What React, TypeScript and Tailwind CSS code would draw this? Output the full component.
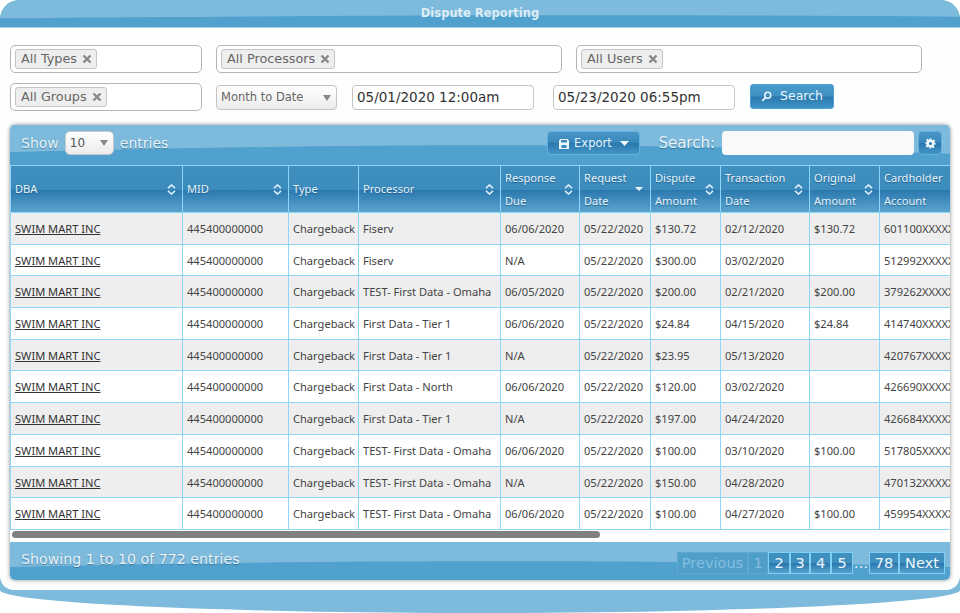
import React from "react";

const rows = [
  ["445400000000", "Chargeback", "Fiserv", "06/06/2020", "05/22/2020", "$130.72", "02/12/2020", "$130.72", "601100XXXXXX"],
  ["445400000000", "Chargeback", "Fiserv", "N/A", "05/22/2020", "$300.00", "03/02/2020", "", "512992XXXXXX"],
  ["445400000000", "Chargeback", "TEST- First Data - Omaha", "06/05/2020", "05/22/2020", "$200.00", "02/21/2020", "$200.00", "379262XXXXXX"],
  ["445400000000", "Chargeback", "First Data - Tier 1", "06/06/2020", "05/22/2020", "$24.84", "04/15/2020", "$24.84", "414740XXXXXX"],
  ["445400000000", "Chargeback", "First Data - Tier 1", "N/A", "05/22/2020", "$23.95", "05/13/2020", "", "420767XXXXXX"],
  ["445400000000", "Chargeback", "First Data - North", "06/06/2020", "05/22/2020", "$120.00", "03/02/2020", "", "426690XXXXXX"],
  ["445400000000", "Chargeback", "First Data - Tier 1", "N/A", "05/22/2020", "$197.00", "04/24/2020", "", "426684XXXXXX"],
  ["445400000000", "Chargeback", "TEST- First Data - Omaha", "06/06/2020", "05/22/2020", "$100.00", "03/10/2020", "$100.00", "517805XXXXXX"],
  ["445400000000", "Chargeback", "TEST- First Data - Omaha", "N/A", "05/22/2020", "$150.00", "04/28/2020", "", "470132XXXXXX"],
  ["445400000000", "Chargeback", "TEST- First Data - Omaha", "06/06/2020", "05/22/2020", "$100.00", "04/27/2020", "$100.00", "459954XXXXXX"],
];

const widths = [172, 106, 70, 142, 79, 71, 70, 89, 70, 100];

function Wave({ d }: { d: string }) {
  return (
    <svg className="absolute inset-0 h-full w-full" viewBox="0 0 100 100" preserveAspectRatio="none">
      <path d={d} fill="#7dbadb" />
    </svg>
  );
}

function Tag({ label }: { label: string }) {
  return (
    <span className="inline-flex h-[20px] items-center gap-[5px] rounded-[3px] border border-[#c4c4c4] bg-[#eeeeee] pl-[5px] pr-[4px] text-[12.8px] text-[#666666]">
      {label}
      <svg width="10" height="10" viewBox="0 0 10 10" className="shrink-0">
        <path d="M1.5 1.5 8.5 8.5M8.5 1.5 1.5 8.5" stroke="#888888" strokeWidth="2.4" />
      </svg>
    </span>
  );
}

function TagBox({ label, w }: { label: string; w: string }) {
  return (
    <div className={`flex h-[28px] items-center rounded-[5px] border border-[#b5b5b5] bg-white pl-[4px] ${w}`}>
      <Tag label={label} />
    </div>
  );
}

function DateBox({ value, w }: { value: string; w: string }) {
  return (
    <div className={`flex h-[25px] items-center rounded-[4px] border border-[#c4c4c4] bg-white pl-[4px] pt-[1px] text-[13.5px] text-[#333333] ${w}`}>
      {value}
    </div>
  );
}

function Sort({ active }: { active?: boolean }) {
  if (active) {
    return (
      <svg width="10" height="6" viewBox="0 0 10 6" className="shrink-0">
        <path d="M1 1h8L5 5z" fill="#e8f4fb" />
      </svg>
    );
  }
  return (
    <svg width="9" height="11" viewBox="0 0 9 11" className="shrink-0">
      <path d="M1 4.2 4.5 1 8 4.2M1 6.8 4.5 10 8 6.8" fill="none" stroke="#dceefa" strokeWidth="1.6" />
    </svg>
  );
}

function Head({ a, b, sort = true, active }: { a: string; b?: string; sort?: boolean; active?: boolean }) {
  return (
    <th className="relative border-x border-[#8dd6fb] p-0 text-left font-normal">
      <div className="flex h-[46px] items-center justify-between pl-[4px] pr-[6px] text-[#e6f3fb] [text-shadow:0_1px_1px_rgba(20,70,110,0.6)]">
        {b ? (
          <div className="flex flex-col gap-[7px] leading-[16px]">
            <span>{a}</span>
            <span>{b}</span>
          </div>
        ) : (
          <span className="pt-[1px]">{a}</span>
        )}
        {sort && <Sort active={active} />}
      </div>
    </th>
  );
}

function PageBtn({ label, w, off }: { label: string; w: string; off?: boolean }) {
  return (
    <span
      className={
        off
          ? `flex h-[22px] items-center justify-center border border-[#5ea8d0] bg-[#4f9fcb] pt-[2px] text-[#85bedd] ${w}`
          : `flex h-[22px] items-center justify-center border border-[#7fd0f5] bg-[linear-gradient(#3f8fbf_0%,#3f8fbf_50%,#2a78af_52%,#58a2cc_100%)] pt-[2px] text-[#eef7fc] ${w}`
      }
    >
      {label}
    </span>
  );
}

export default function App() {
  return (
    <div className="h-[613px] w-[960px] overflow-hidden bg-white [font-family:'DejaVu_Sans',Verdana,sans-serif]">
      <div className="h-[613px] w-[960px] rounded-t-[20px] rounded-b-[480px_23px] bg-[#7dbadb]">
        <div className="relative flex h-[28px] items-center justify-center overflow-hidden rounded-t-[20px] border-b border-[#a9cfe8] bg-[#50a1cd]">
          <Wave d="M0 0H100V62C70 52 40 56 0 68Z" />
          <span className="relative text-[11.5px] font-bold text-[#dcedf7]">Dispute Reporting</span>
        </div>

        <div className="flex h-[562px] flex-col rounded-b-[14px] bg-[#fdfefe] pt-[17px] pb-[10px] pl-[10px] pr-[10px]">
          <div className="flex gap-[14px]">
            <TagBox label="All Types" w="w-[192px]" />
            <TagBox label="All Processors" w="w-[346px]" />
            <TagBox label="All Users" w="w-[346px]" />
          </div>
          <div className="mt-[10px] flex items-center">
            <TagBox label="All Groups" w="w-[192px]" />
            <div className="ml-[14px] flex h-[25px] w-[121px] items-center justify-between rounded-[4px] border border-[#c4c4c4] bg-[linear-gradient(#ffffff,#ececec)] pl-[4px] pr-[5px] pt-[1px] text-[11.5px] text-[#666666]">
              Month to Date
              <svg width="8" height="6" viewBox="0 0 8 6"><path d="M0 0h8L4 6z" fill="#888888" /></svg>
            </div>
            <div className="ml-[15px]"><DateBox value="05/01/2020 12:00am" w="w-[182px]" /></div>
            <div className="ml-[19px]"><DateBox value="05/23/2020 06:55pm" w="w-[182px]" /></div>
            <div className="ml-[15px] flex h-[25px] w-[84px] -translate-y-[1px] items-center justify-center gap-[8px] rounded-[3px] border border-[#4fa3d3] bg-[linear-gradient(#4a9acb_0%,#3f90c2_48%,#2a78af_52%,#3f93c6_100%)] pt-[1px] text-[12.5px] text-[#e8f4fb]">
              <svg width="11" height="11" viewBox="0 0 11 11">
                <circle cx="6.8" cy="4.2" r="3" fill="none" stroke="#e8f4fb" strokeWidth="1.5" />
                <path d="M4.5 6.5 1.2 9.8" stroke="#e8f4fb" strokeWidth="1.8" />
              </svg>
              Search
            </div>
          </div>

          <div className="mt-[14px] flex-1 overflow-hidden rounded-[5px] bg-white shadow-[0_0_4px_#8a8a8a]">
            <div className="relative flex h-[40px] items-start overflow-hidden bg-[#50a1cd] pl-[11px] pr-[8px] pt-[6px]">
              <Wave d="M0 0H100V72C70 44 40 44 0 68Z" />
              <div className="relative flex h-[24px] items-center gap-[6px] text-[14px] text-[#e6f3fb] [text-shadow:0_1px_1px_rgba(20,70,110,0.5)]">
                Show
                <div className="flex h-[24px] w-[49px] items-center justify-between rounded-[5px] border border-[#c8c8c8] bg-[linear-gradient(#ffffff,#ececec)] pl-[4px] pr-[5px] text-[12px] text-[#555555] [text-shadow:none]">
                  10
                  <svg width="8" height="6" viewBox="0 0 8 6"><path d="M0 0h8L4 6z" fill="#888888" /></svg>
                </div>
                entries
              </div>
              <div className="relative ml-auto flex items-center">
                <div className="flex h-[24px] w-[93px] items-center justify-center gap-[5px] rounded-[4px] border border-[#5fb2df] bg-[linear-gradient(#4a96c6,#3788bb_48%,#2a78af_52%,#4595c6)] pt-[1px] text-[11.5px] text-[#e6f3fb]">
                  <svg width="10" height="10" viewBox="0 0 10 10">
                    <path d="M0 1.5 1.5 0h7L10 1.5V10H0z" fill="#eef7fc" />
                    <path d="M2 1h6v2.4H2zM2.5 6h5v3h-5z" fill="#3a8abc" />
                  </svg>
                  Export
                  <svg className="ml-[3px]" width="9" height="5" viewBox="0 0 9 5"><path d="M0 0h9L4.5 5z" fill="#eef7fc" /></svg>
                </div>
                <span className="ml-[18px] text-[15px] text-[#e6f3fb] [text-shadow:0_1px_1px_rgba(20,70,110,0.5)]">Search:</span>
                <div className="ml-[7px] h-[24px] w-[192px] rounded-[4px] bg-[#f9f9f9]" />
                <div className="ml-[4px] flex h-[24px] w-[24px] items-center justify-center rounded-[4px] border border-[#5fb2df] bg-[linear-gradient(#4a96c6,#3788bb_48%,#2a78af_52%,#4595c6)]">
                  <svg width="11" height="11" viewBox="0 0 24 24" fill="#eef7fc">
                    <path fillRule="evenodd" d="M10 1h4l.7 3.2 1.9.8 2.8-1.8 2.8 2.8-1.8 2.8.8 1.9L23 10v4l-3.2.7-.8 1.9 1.8 2.8-2.8 2.8-2.8-1.8-1.9.8L12.6 23h-2.9l-.7-3.2-1.9-.8-2.8 1.8-2.8-2.8 1.8-2.8-.8-1.9L1 14v-4l2.4-.7.8-1.9L2.4 4.6l2.8-2.8 2.8 1.8 1.9-.8zM12 8.5a3.5 3.5 0 1 0 0 7 3.5 3.5 0 0 0 0-7z" />
                  </svg>
                </div>
              </div>
            </div>

            <div className="overflow-hidden border-t border-[#8dd6fb]">
              <table className="w-[969px] table-fixed border-collapse text-[11.1px] text-[#444444] [font-family:'Noto_Sans',sans-serif]">
                <colgroup>
                  {widths.map((w, i) => (
                    <col key={i} style={{ width: w }} />
                  ))}
                </colgroup>
                <thead className="bg-[linear-gradient(#3f8fbf_0%,#3b8bbc_50%,#2a78af_51%,#5ea6cf_100%)]">
                  <tr>
                    <Head a="DBA" />
                    <Head a="MID" />
                    <Head a="Type" sort={false} />
                    <Head a="Processor" />
                    <Head a="Response" b="Due" />
                    <Head a="Request" b="Date" active />
                    <Head a="Dispute" b="Amount" />
                    <Head a="Transaction" b="Date" />
                    <Head a="Original" b="Amount" />
                    <Head a="Cardholder" b="Account" sort={false} />
                  </tr>
                </thead>
                <tbody>
                  {rows.map((r, i) => (
                    <tr key={i} className={i % 2 === 0 ? "bg-[#eeeeee]" : "bg-white"}>
                      <td className="h-[31.7px] whitespace-nowrap border border-[#8dd6fb] px-[4px] pt-[2px] text-[#333333]">
                        <span className="underline">SWIM MART INC</span>
                      </td>
                      {r.map((c, j) => (
                        <td key={j} className="h-[31.7px] overflow-hidden whitespace-nowrap border border-[#8dd6fb] px-[4px] pt-[2px]">
                          {c}
                        </td>
                      ))}
                    </tr>
                  ))}
                </tbody>
              </table>
            </div>

            <div className="flex h-[12px] items-start bg-white pl-[2px] pt-[1px]">
              <div className="h-[7px] w-[588px] rounded-[4px] bg-[#808080]" />
            </div>

            <div className="relative flex h-[38px] items-start overflow-hidden bg-[#50a1cd] pl-[11px] pr-[5px] pt-[8px]">
              <Wave d="M0 0H100V66C80 50 40 42 0 66Z" />
              <span className="relative -mt-[1px] text-[14.2px] leading-[20px] text-[#e6f3fb] [text-shadow:0_1px_1px_rgba(20,70,110,0.5)]">Showing 1 to 10 of 772 entries</span>
              <div className="relative ml-auto mt-[1px] flex items-center text-[14.5px]">
                <PageBtn label="Previous" w="w-[71px]" off />
                <PageBtn label="1" w="w-[20px]" off />
                <PageBtn label="2" w="w-[22px]" />
                <PageBtn label="3" w="w-[20px]" />
                <PageBtn label="4" w="w-[21px]" />
                <PageBtn label="5" w="w-[22px]" />
                <span className="w-[16px] pt-[2px] text-center text-[#eef7fc]">…</span>
                <PageBtn label="78" w="w-[30px]" />
                <PageBtn label="Next" w="w-[46px]" />
              </div>
            </div>
          </div>
        </div>
      </div>
    </div>
  );
}
